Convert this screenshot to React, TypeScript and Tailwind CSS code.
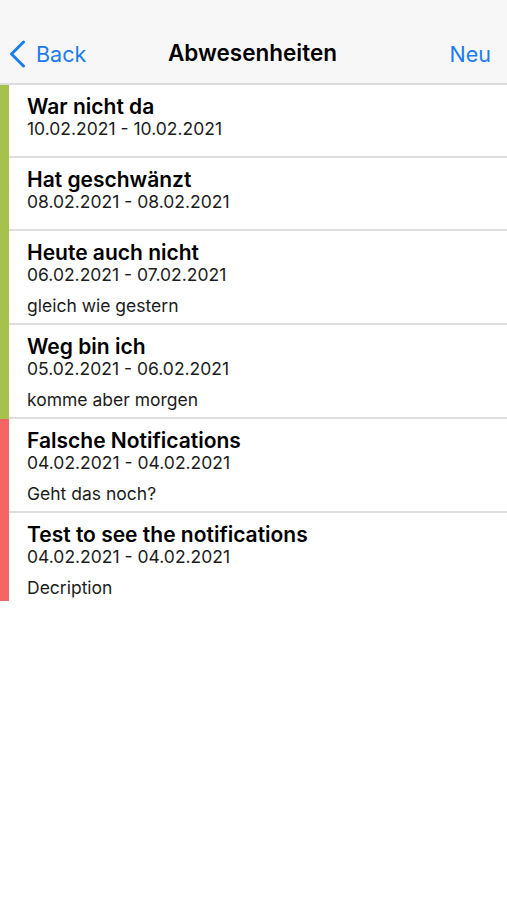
type Absence = {
  title: string;
  range: string;
  note?: string;
  excused: boolean;
};

const absences: Absence[] = [
  { title: "War nicht da", range: "10.02.2021 - 10.02.2021", excused: true },
  { title: "Hat geschwänzt", range: "08.02.2021 - 08.02.2021", excused: true },
  { title: "Heute auch nicht", range: "06.02.2021 - 07.02.2021", note: "gleich wie gestern", excused: true },
  { title: "Weg bin ich", range: "05.02.2021 - 06.02.2021", note: "komme aber morgen", excused: true },
  { title: "Falsche Notifications", range: "04.02.2021 - 04.02.2021", note: "Geht das noch?", excused: false },
  { title: "Test to see the notifications", range: "04.02.2021 - 04.02.2021", note: "Decription", excused: false },
];

function AbsenceRow({ item, last }: { item: Absence; last: boolean }) {
  let pad = "pb-[17px]";
  if (item.note) pad = last ? "pb-[1px]" : "pb-[5px]";
  return (
    <li className="flex">
      <div className={`w-[9px] shrink-0 ${item.excused ? "bg-[#a6c14c]" : "bg-[#f56565]"}`} />
      <div className={`flex-1 pl-[18px] pt-[9px] ${pad} ${last ? "" : "border-b-2 border-[#dedede]"}`}>
        <div className="text-[21px] leading-[25px] font-semibold text-black">{item.title}</div>
        <div className="text-[17.5px] leading-[20px] text-[#1c1c1c]">{item.range}</div>
        {item.note && (
          <div className="mt-[9px] text-[17.5px] leading-[24px] text-[#1c1c1c]">{item.note}</div>
        )}
      </div>
    </li>
  );
}

export default function App() {
  return (
    <div className="min-h-[900px] bg-white font-['Inter','Liberation_Sans',sans-serif]">
      <header className="h-[85px] bg-[#f7f7f7] border-b-2 border-[#dcdcdc] flex items-end pb-[13px] px-[9px]">
        <div className="flex-1 flex items-center text-[#1a7cf0]">
          <svg width="17" height="28" viewBox="0 0 17 28" fill="none" className="shrink-0">
            <polyline
              points="14.5,2 2.5,14 14.5,26"
              stroke="currentColor"
              strokeWidth="3"
              strokeLinecap="round"
              strokeLinejoin="round"
            />
          </svg>
          <span className="text-[21.5px] ml-[10px]">Back</span>
        </div>
        <h1 className="ml-[5px] text-[22.5px] font-semibold text-black">Abwesenheiten</h1>
        <div className="flex-1 flex justify-end pr-[7px]">
          <span className="text-[21.5px] text-[#1a7cf0]">Neu</span>
        </div>
      </header>
      <ul>
        {absences.map((a, i) => (
          <AbsenceRow key={i} item={a} last={i === absences.length - 1} />
        ))}
      </ul>
    </div>
  );
}
